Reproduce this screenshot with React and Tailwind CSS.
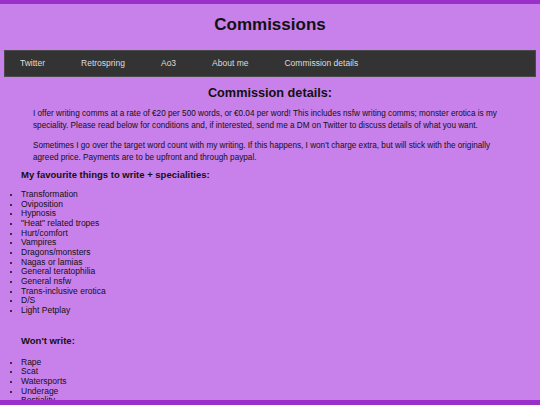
import React from "react";

const fav = [
  "Transformation",
  "Oviposition",
  "Hypnosis",
  "\"Heat\" related tropes",
  "Hurt/comfort",
  "Vampires",
  "Dragons/monsters",
  "Nagas or lamias",
  "General teratophilia",
  "General nsfw",
  "Trans-inclusive erotica",
  "D/S",
  "Light Petplay",
];

const wont = ["Rape", "Scat", "Watersports", "Underage", "Bestiality", "Gore"];

export default function App() {
  return (
    <div
      className="h-[405px] overflow-hidden bg-[#c880ea] border-t-4 border-[#9b2fc9] text-[#111]"
      style={{ fontFamily: '"Liberation Sans", Arial, sans-serif' }}
    >
      <h1 className="text-[17px] font-bold text-center leading-[20px] pt-[11px] mb-[15px]">
        Commissions
      </h1>
      <nav className="mx-[4px] h-[27px] bg-[#333333] border border-[#4a4a4a] flex items-center pl-[15px] gap-[36px] text-[8.5px] text-[#dddddd]">
        <span>Twitter</span>
        <span>Retrospring</span>
        <span>Ao3</span>
        <span>About me</span>
        <span>Commission details</span>
      </nav>
      <h2 className="text-[12.7px] font-bold text-center leading-[16px] mt-[8px]">
        Commission details:
      </h2>
      <p className="text-[8.2px] leading-[12px] mt-[7px] px-[33px]">
        I offer writing comms at a rate of €20 per 500 words, or €0.04 per word! This includes nsfw writing comms; monster erotica is my speciality. Please read below for conditions and, if interested, send me a DM on Twitter to discuss details of what you want.
      </p>
      <p className="text-[8.2px] leading-[12px] mt-[8px] px-[33px]">
        Sometimes I go over the target word count with my writing. If this happens, I won't charge extra, but will stick with the originally agreed price. Payments are to be upfront and through paypal.
      </p>
      <h3 className="text-[9.5px] font-bold leading-[12px] mt-[5px] pl-[21px]">
        My favourite things to write + specialities:
      </h3>
      <ul className="list-disc pl-[21px] mt-[9px] text-[8.5px] leading-[9.67px]">
        {fav.map((f) => (
          <li key={f} className="marker:text-[7px]">{f}</li>
        ))}
      </ul>
      <h3 className="text-[9.5px] font-bold leading-[12px] mt-[19px] pl-[21px]">
        Won't write:
      </h3>
      <ul className="list-disc pl-[21px] mt-[11px] text-[8.5px] leading-[9.67px]">
        {wont.map((f) => (
          <li key={f} className="marker:text-[7px]">{f}</li>
        ))}
      </ul>
      <div className="fixed bottom-0 left-0 right-0 h-[5px] bg-[#9b2fc9]" />
    </div>
  );
}
